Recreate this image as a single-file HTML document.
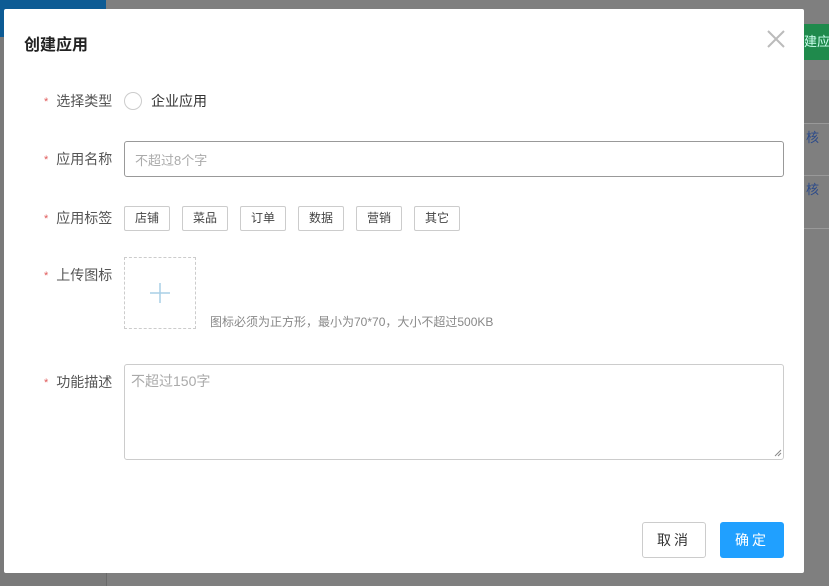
<!DOCTYPE html>
<html><head><meta charset="utf-8"><style>
*{box-sizing:border-box;margin:0;padding:0}
body{width:829px;height:586px;background:#7f7f7f;position:relative;overflow:hidden;font-family:"Liberation Sans","Noto Sans CJK SC",sans-serif;font-size:13px;color:#333}
.abs{position:absolute}
.modal{left:4px;top:9px;width:800px;height:564px;background:#fff;border-radius:2px}
.lbl{position:absolute;left:40px;font-size:14px;color:#555;width:80px;white-space:nowrap}
.lbl b{color:#e05a5a;font-weight:normal;margin-right:8px;font-size:11px;vertical-align:1px}
.tag{position:absolute;top:197px;height:25px;width:46px;border:1px solid #ccc;border-radius:2px;font-size:12px;color:#444;text-align:center;line-height:23px}
</style></head><body>
<div class="abs" style="left:0;top:0;width:106px;height:37px;background:#0d5b94"></div>
<div class="abs" style="left:0;top:37px;width:106px;height:549px;background:#7a7a7a"></div>
<div class="abs" style="left:804px;top:24px;width:25px;height:36px;background:#1f8a4c;color:#cfe;font-size:13px;line-height:36px;white-space:nowrap;overflow:hidden">建应</div>
<div class="abs" style="left:804px;top:80px;width:25px;height:43px;background:#777"></div>
<div class="abs" style="left:804px;top:123px;width:25px;height:1px;background:#999"></div>
<div class="abs" style="left:804px;top:175px;width:25px;height:1px;background:#999"></div>
<div class="abs" style="left:804px;top:228px;width:25px;height:1px;background:#999"></div>
<div class="abs" style="left:806px;top:127px;color:#2b4a8a;font-size:13px">核</div>
<div class="abs" style="left:806px;top:179px;color:#2b4a8a;font-size:13px">核</div>
<div class="abs" style="left:106px;top:573px;width:1px;height:13px;background:#6a6a6a"></div>

<div class="abs modal">
  <div class="abs" style="left:20px;top:22px;font-size:16px;font-weight:bold;color:#222">创建应用</div>
  <svg class="abs" style="left:763px;top:21px" width="18" height="18"><path d="M1 1L17 17M17 1L1 17" stroke="#bbb" stroke-width="2"/></svg>

  <div class="lbl" style="top:82px"><b>*</b>选择类型</div>
  <div class="abs" style="left:120px;top:83px;width:18px;height:18px;border:1px solid #ccc;border-radius:50%"></div>
  <div class="abs" style="left:147px;top:82px;color:#333;font-size:14px">企业应用</div>

  <div class="lbl" style="top:140px"><b>*</b>应用名称</div>
  <div class="abs" style="left:120px;top:132px;width:660px;height:36px;border:1px solid #999;border-radius:3px;padding:8px 10px;color:#aaa">不超过8个字</div>

  <div class="lbl" style="top:199px"><b>*</b>应用标签</div>
  <div class="tag" style="left:120px">店铺</div>
  <div class="tag" style="left:178px">菜品</div>
  <div class="tag" style="left:236px">订单</div>
  <div class="tag" style="left:294px">数据</div>
  <div class="tag" style="left:352px">营销</div>
  <div class="tag" style="left:410px">其它</div>

  <div class="lbl" style="top:256px"><b>*</b>上传图标</div>
  <div class="abs" style="left:120px;top:248px;width:72px;height:72px;border:1px dashed #ccc"></div>
  <svg class="abs" style="left:146px;top:274px" width="20" height="20"><path d="M10 0V20M0 10H20" stroke="#a9cfe6" stroke-width="1.5"/></svg>
  <div class="abs" style="left:206px;top:304px;font-size:12px;color:#888;white-space:nowrap">图标必须为正方形，最小为70*70，大小不超过500KB</div>

  <div class="lbl" style="top:363px"><b>*</b>功能描述</div>
  <div class="abs" style="left:120px;top:355px;width:660px;height:96px;border:1px solid #ccc;border-radius:3px;padding:6px 6px;color:#aaa;font-size:14px">不超过150字</div>
  <svg class="abs" style="left:770px;top:440px" width="8" height="8"><path d="M1 7L7 1M4 7L7 4" stroke="#888"/></svg>

  <div class="abs" style="left:638px;top:513px;width:64px;height:36px;border:1px solid #ccc;border-radius:3px;text-align:center;line-height:34px;font-size:14px;color:#333;letter-spacing:3px">取消</div>
  <div class="abs" style="left:716px;top:513px;width:64px;height:36px;background:#20a0ff;border-radius:3px;text-align:center;line-height:36px;font-size:14px;color:#fff;letter-spacing:3px">确定</div>
</div>
</body></html>
